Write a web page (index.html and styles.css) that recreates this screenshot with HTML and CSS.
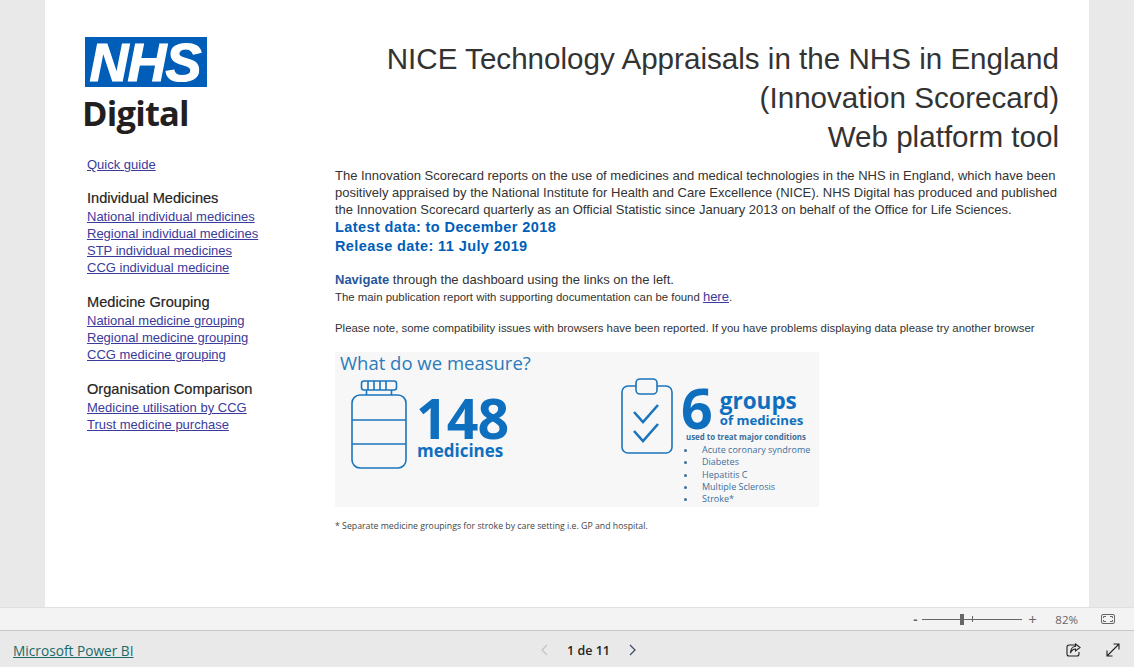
FILE: index.html
```html
<!DOCTYPE html>
<html lang="en">
<head>
    <meta charset="UTF-8">
    <meta name="viewport" content="width=device-width, initial-scale=1.0">
    <title>Innovation Scorecard</title>
    <link rel="stylesheet" href="styles.css">
</head>
<body>
    <div class="stage">
        <div class="canvas">
            <!-- Left navigation -->
            <nav class="side">
                <div class="nhs-logo">NHS</div>
                <div class="digital">Digital</div>
                <a class="quick" href="#">Quick guide</a>

                <h2>Individual Medicines</h2>
                <a href="#">National individual medicines</a>
                <a href="#">Regional individual medicines</a>
                <a href="#">STP individual medicines</a>
                <a href="#">CCG individual medicine</a>

                <h2>Medicine Grouping</h2>
                <a href="#">National medicine grouping</a>
                <a href="#">Regional medicine grouping</a>
                <a href="#">CCG medicine grouping</a>

                <h2>Organisation Comparison</h2>
                <a href="#">Medicine utilisation by CCG</a>
                <a href="#">Trust medicine purchase</a>
            </nav>

            <!-- Main text -->
            <main class="main">
                <h1>NICE Technology Appraisals in the NHS in England<br>(Innovation Scorecard)<br>Web platform tool</h1>
                <p class="intro">The Innovation Scorecard reports on the use of medicines and medical technologies in the NHS in England, which have been<br>positively appraised by the National Institute for Health and Care Excellence (NICE). NHS Digital has produced and published<br>the Innovation Scorecard quarterly as an Official Statistic since January 2013 on behalf of the Office for Life Sciences.</p>
                <p class="dates">Latest data: to December 2018</p>
                <p class="dates">Release date: 11 July 2019</p>
                <p class="navigate"><b>Navigate</b> through the dashboard using the links on the left.</p>
                <p class="small">The main publication report with supporting documentation can be found <a href="#">here</a>.</p>
                <p class="small note">Please note, some compatibility issues with browsers have been reported. If you have problems displaying data please try another browser</p>

                <!-- Infographic -->
                <div class="measure">
                    <div class="measure-title">What do we measure?</div>
                    <div class="measure-body">
                        <svg class="bottle" width="56" height="89" viewBox="0 0 56 89" fill="none" stroke="#1b75bc" stroke-width="1.6">
                            <rect x="10.500" y="1" width="35" height="9" rx="2.500"/>
                            <path d="M17 1v9M23 1v9M29 1v9M35 1v9M15.500 10v5M40.500 10v5"/>
                            <rect x="1" y="15" width="54" height="73" rx="8"/>
                            <path d="M1 40h54M1 64h54"/>
                        </svg>
                        <div class="count">
                            <div class="big">148</div>
                            <div class="count-label">medicines</div>
                        </div>
                        <svg class="clip" width="52" height="76" viewBox="0 0 52 76" fill="none" stroke="#1b75bc" stroke-width="1.6">
                            <rect x="1" y="8" width="50" height="67" rx="6"/>
                            <rect x="15" y="1" width="21" height="15" rx="4" fill="#f7f7f7"/>
                            <path d="M13 34l9 10L37 27M13 53l9 10L37 46" stroke-width="2.600"/>
                        </svg>
                        <div class="groups">
                            <div class="groups-head">
                                <div class="big">6</div>
                                <div class="groups-word">
                                    <div class="word-big">groups</div>
                                    <div class="word-small">of medicines</div>
                                </div>
                            </div>
                            <div class="used">used to treat major conditions</div>
                            <ul>
                                <li>Acute coronary syndrome</li>
                                <li>Diabetes</li>
                                <li>Hepatitis C</li>
                                <li>Multiple Sclerosis</li>
                                <li>Stroke*</li>
                            </ul>
                        </div>
                    </div>
                </div>
                <p class="foot">* Separate medicine groupings for stroke by care setting i.e. GP and hospital.</p>
            </main>
        </div>
    </div>

    <!-- Zoom bar -->
    <div class="zoombar">
        <span class="zoom-sign">-</span>
        <div class="slider"><span class="tick"></span><span class="thumb"></span></div>
        <span class="zoom-sign plus">+</span>
        <span class="pct">82%</span>
        <svg width="16" height="12" viewBox="0 0 16 12" fill="none" stroke="#666" stroke-width="1">
            <rect x="1.500" y="1.500" width="13" height="9" rx="1.500"/>
            <path d="M6 3.500H3.500V5M10 3.500h2.500V5M6 8.500H3.500V7M10 8.500h2.500V7"/>
        </svg>
    </div>

    <!-- Footer -->
    <footer class="footer">
        <a class="brand" href="#">Microsoft Power BI</a>
        <div class="pager">
            <svg width="9" height="12" viewBox="0 0 9 12" fill="none" stroke="#c4c4c4" stroke-width="1.300"><path d="M7 1L2 6l5 5"/></svg>
            <span class="page-num">1 de 11</span>
            <svg width="9" height="12" viewBox="0 0 9 12" fill="none" stroke="#3f4f66" stroke-width="1.300"><path d="M2 1l5 5-5 5"/></svg>
        </div>
        <div class="actions">
            <svg width="15" height="14" viewBox="0 0 15 14" fill="none" stroke="#222" stroke-width="1.100">
                <path d="M9 2H3a2 2 0 0 0-2 2v7a2 2 0 0 0 2 2h8a2 2 0 0 0 2-2V9"/>
                <path d="M9.500 1l4.500 3.500-4.500 3.500V6C7 6 5.500 7.500 4.500 10 4.500 6.500 6.500 3.500 9.500 3.200z"/>
            </svg>
            <svg width="14" height="14" viewBox="0 0 14 14" fill="none" stroke="#222" stroke-width="1.100">
                <path d="M1 13L13 1M7.500 1H13v5.500M1 7.500V13h5.500"/>
            </svg>
        </div>
    </footer>
</body>
</html>
```

FILE: styles.css
```css
/* Page frame */
body {
    margin: 0;
    height: 667px;
    overflow: hidden;
    display: flex;
    flex-direction: column;
    font-family: "Liberation Sans", Arial, sans-serif;
    background-color: #e9e9e9;
    color: #252423;
}

.stage {
    height: 607px;
    padding-left: 45px;
    box-sizing: border-box;
}

.canvas {
    width: 1044px;
    height: 607px;
    background-color: #fff;
    display: flex;
    overflow: hidden;
}

/* Left navigation */
.side {
    width: 290px;
    flex: none;
    box-sizing: border-box;
    padding: 37px 0 0 42px;
    display: flex;
    flex-direction: column;
    align-items: flex-start;
}

.side a {
    font-size: 13px;
    line-height: 17px;
    color: #3a3a9c;
}

.side h2 {
    margin: 17px 0 0;
    font-size: 14.600px;
    font-weight: normal;
    line-height: 19px;
    color: #252423;
    -webkit-text-stroke: 0.2px #252423;
}

.side h2:first-of-type {
    margin-top: 16px;
}

.nhs-logo {
    width: 122px;
    height: 50px;
    margin-left: -2px;
    padding-right: 2px;
    box-sizing: border-box;
    background-color: #005eb8;
    color: #fff;
    font-size: 54px;
    line-height: 50px;
    font-weight: bold;
    font-style: italic;
    letter-spacing: -1px;
    text-align: center;
    -webkit-text-stroke: 1.2px #fff;
}

.digital {
    margin: 5px 0 0 -5px;
    font-family: "Open Sans", sans-serif;
    font-size: 34.500px;
    line-height: 42px;
    font-weight: 700;
    letter-spacing: -0.8px;
    color: #231f20;
}

.side .quick {
    margin-top: 22px;
}

/* Main text */
.main {
    flex: 1;
    padding-right: 30px;
    padding-top: 39px;
}

h1 {
    margin: 0;
    text-align: right;
    font-size: 29.600px;
    line-height: 39px;
    font-weight: normal;
    color: #333;
}

p {
    margin: 0;
}

.intro {
    margin-top: 11px;
    font-size: 13px;
    line-height: 17px;
    white-space: nowrap;
    color: #333;
}

.dates {
    font-size: 14.500px;
    line-height: 19px;
    font-weight: bold;
    letter-spacing: 0.4px;
    color: #005eb8;
}

.navigate {
    margin-top: 15px;
    font-size: 13px;
    line-height: 17px;
    color: #333;
}

.navigate b {
    color: #27569b;
}

.small {
    font-size: 11.400px;
    line-height: 16px;
    margin-top: 1px;
    color: #333;
}

.small a {
    font-size: 13px;
    color: #3a3a9c;
}

.note {
    margin-top: 15px;
}

/* Infographic */
.measure {
    width: 484px;
    height: 155px;
    margin-top: 16px;
    background-color: #f7f7f7;
    color: #0f6fbf;
    font-family: "Open Sans", sans-serif;
}

.measure-title {
    font-size: 18.500px;
    line-height: 22px;
    padding-left: 5px;
    color: #2b7bba;
}

.measure-body {
    display: flex;
    align-items: flex-start;
    padding: 6px 0 0 16px;
}

.bottle {
    flex: none;
    margin-right: 9px;
}

.big {
    font-weight: 700;
    font-size: 55.500px;
    line-height: 45px;
    color: #0f6fbf;
    letter-spacing: -1px;
}

.count {
    width: 205px;
    flex: none;
    margin-top: 15px;
}

.count-label {
    font-size: 17px;
    line-height: 22px;
    font-weight: 700;
    padding-left: 1px;
}

.clip {
    flex: none;
    margin: -2px 8px 0 0;
}

.groups {
    white-space: nowrap;
}

.groups-head {
    display: flex;
    gap: 8px;
    padding-top: 5px;
}

.groups-word {
    padding-top: 5px;
}

.word-big {
    font-size: 22.500px;
    line-height: 22px;
    font-weight: 700;
}

.word-small {
    font-size: 13.200px;
    line-height: 16px;
    font-weight: 700;
}

.used {
    margin: 1px 0 0 5px;
    font-size: 7.900px;
    line-height: 12px;
    font-weight: 700;
    color: #3c6f9c;
}

.groups ul {
    margin: 1px 0 0;
    padding: 0 0 0 16px;
    font-size: 9px;
    line-height: 12.300px;
    color: #3c6f9c;
}

.groups li {
    padding-left: 5px;
}

.foot {
    margin-top: 12px;
    font-family: "Open Sans", sans-serif;
    font-size: 8.750px;
    line-height: 14px;
    color: #444;
}

/* Zoom bar */
.zoombar {
    height: 24px;
    box-sizing: border-box;
    background-color: #f3f3f3;
    border-top: 1px solid #e0e0e0;
    border-bottom: 1px solid #c8c8c8;
    display: flex;
    align-items: center;
    justify-content: flex-end;
    padding-right: 18px;
    font-family: "Open Sans", sans-serif;
    font-size: 11px;
    color: #666;
}

.zoom-sign {
    width: 8px;
    font-weight: bold;
    text-align: center;
    font-size: 13px;
    line-height: 14px;
}

.zoom-sign.plus {
    font-weight: normal;
    font-size: 15px;
}

.slider {
    width: 100px;
    height: 1px;
    margin: 0 6px 0 3px;
    background-color: #666;
    position: relative;
}

.thumb {
    position: absolute;
    left: 38px;
    top: -5px;
    width: 4px;
    height: 11px;
    background-color: #666;
}

.tick {
    position: absolute;
    left: 50px;
    top: -3px;
    width: 1px;
    height: 6px;
    background-color: #666;
}

.pct {
    margin: 0 22px 0 19px;
    font-size: 11.500px;
}

/* Footer */
.footer {
    height: 36px;
    box-sizing: border-box;
    display: flex;
    align-items: center;
    position: relative;
    padding: 2px 14px 0 13px;
    font-family: "Open Sans", sans-serif;
}

.brand {
    font-size: 13.700px;
    color: #1a6a6a;
}

.pager {
    position: absolute;
    left: 540px;
    display: flex;
    align-items: center;
    gap: 18px;
}

.page-num {
    font-size: 12.500px;
    font-weight: 600;
    color: #252423;
}

.actions {
    margin-left: auto;
    display: flex;
    align-items: center;
    gap: 25px;
}
```
